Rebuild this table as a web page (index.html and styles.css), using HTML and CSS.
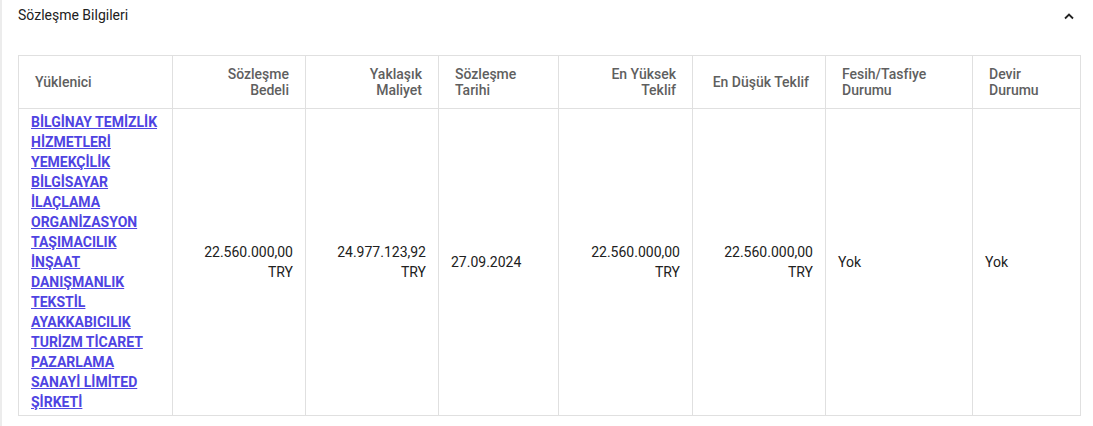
FILE: index.html
```html
<!DOCTYPE html>
<html lang="tr">
<head>
<meta charset="utf-8">
<link rel="stylesheet" href="styles.css">
</head>
<body>
<div class="page">
  <section class="panel">
    <header class="panel-head">
      <h2 class="panel-title">Sözleşme Bilgileri</h2>
      <svg class="chev" width="12" height="8" viewBox="0 0 12 8"><path d="M2 6.5 L6 2.5 L10 6.5" fill="none" stroke="#222" stroke-width="1.8"/></svg>
    </header>
    <table class="grid">
      <colgroup>
        <col style="width:154px"><col style="width:133px"><col style="width:133px"><col style="width:120px"><col style="width:134px"><col style="width:133px"><col style="width:147px"><col style="width:108px">
      </colgroup>
      <thead>
        <tr>
          <th>Yüklenici</th>
          <th class="r">Sözleşme<br>Bedeli</th>
          <th class="r">Yaklaşık<br>Maliyet</th>
          <th>Sözleşme<br>Tarihi</th>
          <th class="r">En Yüksek<br>Teklif</th>
          <th class="r">En Düşük Teklif</th>
          <th>Fesih/Tasfiye<br>Durumu</th>
          <th>Devir<br>Durumu</th>
        </tr>
      </thead>
      <tbody>
        <tr>
          <td class="firm"><a href="#">BİLGİNAY TEMİZLİK HİZMETLERİ YEMEKÇİLİK BİLGİSAYAR İLAÇLAMA ORGANİZASYON TAŞIMACILIK İNŞAAT DANIŞMANLIK TEKSTİL AYAKKABICILIK TURİZM TİCARET PAZARLAMA SANAYİ LİMİTED ŞİRKETİ</a></td>
          <td class="r">22.560.000,00<br>TRY</td>
          <td class="r">24.977.123,92<br>TRY</td>
          <td>27.09.2024</td>
          <td class="r">22.560.000,00<br>TRY</td>
          <td class="r">22.560.000,00<br>TRY</td>
          <td>Yok</td>
          <td>Yok</td>
        </tr>
      </tbody>
    </table>
  </section>
</div>
</body>
</html>
```

FILE: styles.css
```css
html, body {
  margin: 0;
  padding: 0;
  background: #ffffff;
}
body {
  font-family: Roboto, "Noto Sans", Arial, sans-serif;
  color: #212121;
  font-size: 14px;
}
.page {
  border-left: 2px solid #ececec;
  min-height: 426px;
  box-sizing: border-box;
}
.panel {
  padding: 0 13px 0 16px;
}
.panel-head {
  display: flex;
  align-items: center;
  justify-content: space-between;
  height: 30px;
  margin-bottom: 25px;
}
.panel-title {
  margin: 0;
  font-size: 14px;
  font-weight: 400;
  color: #212121;
  line-height: 20px;
}
.chev {
  margin-right: 5px;
  margin-top: 1px;
}
.grid {
  border-collapse: collapse;
  table-layout: fixed;
  width: 1062px;
}
.grid th, .grid td {
  border: 1px solid #e0e0e0;
}
.grid th {
  font-weight: 500;
  color: #5f5f5f;
  text-align: left;
  vertical-align: middle;
  line-height: 16px;
  padding: 10px 16px;
  height: 32px;
}
.grid td {
  vertical-align: middle;
  line-height: 20px;
  padding: 3px 12px;
  text-align: left;
}
.grid th.r, .grid td.r {
  text-align: right;
}
.grid td.firm a {
  color: #4f44e2;
  font-weight: 700;
  text-decoration: underline;
}
```
